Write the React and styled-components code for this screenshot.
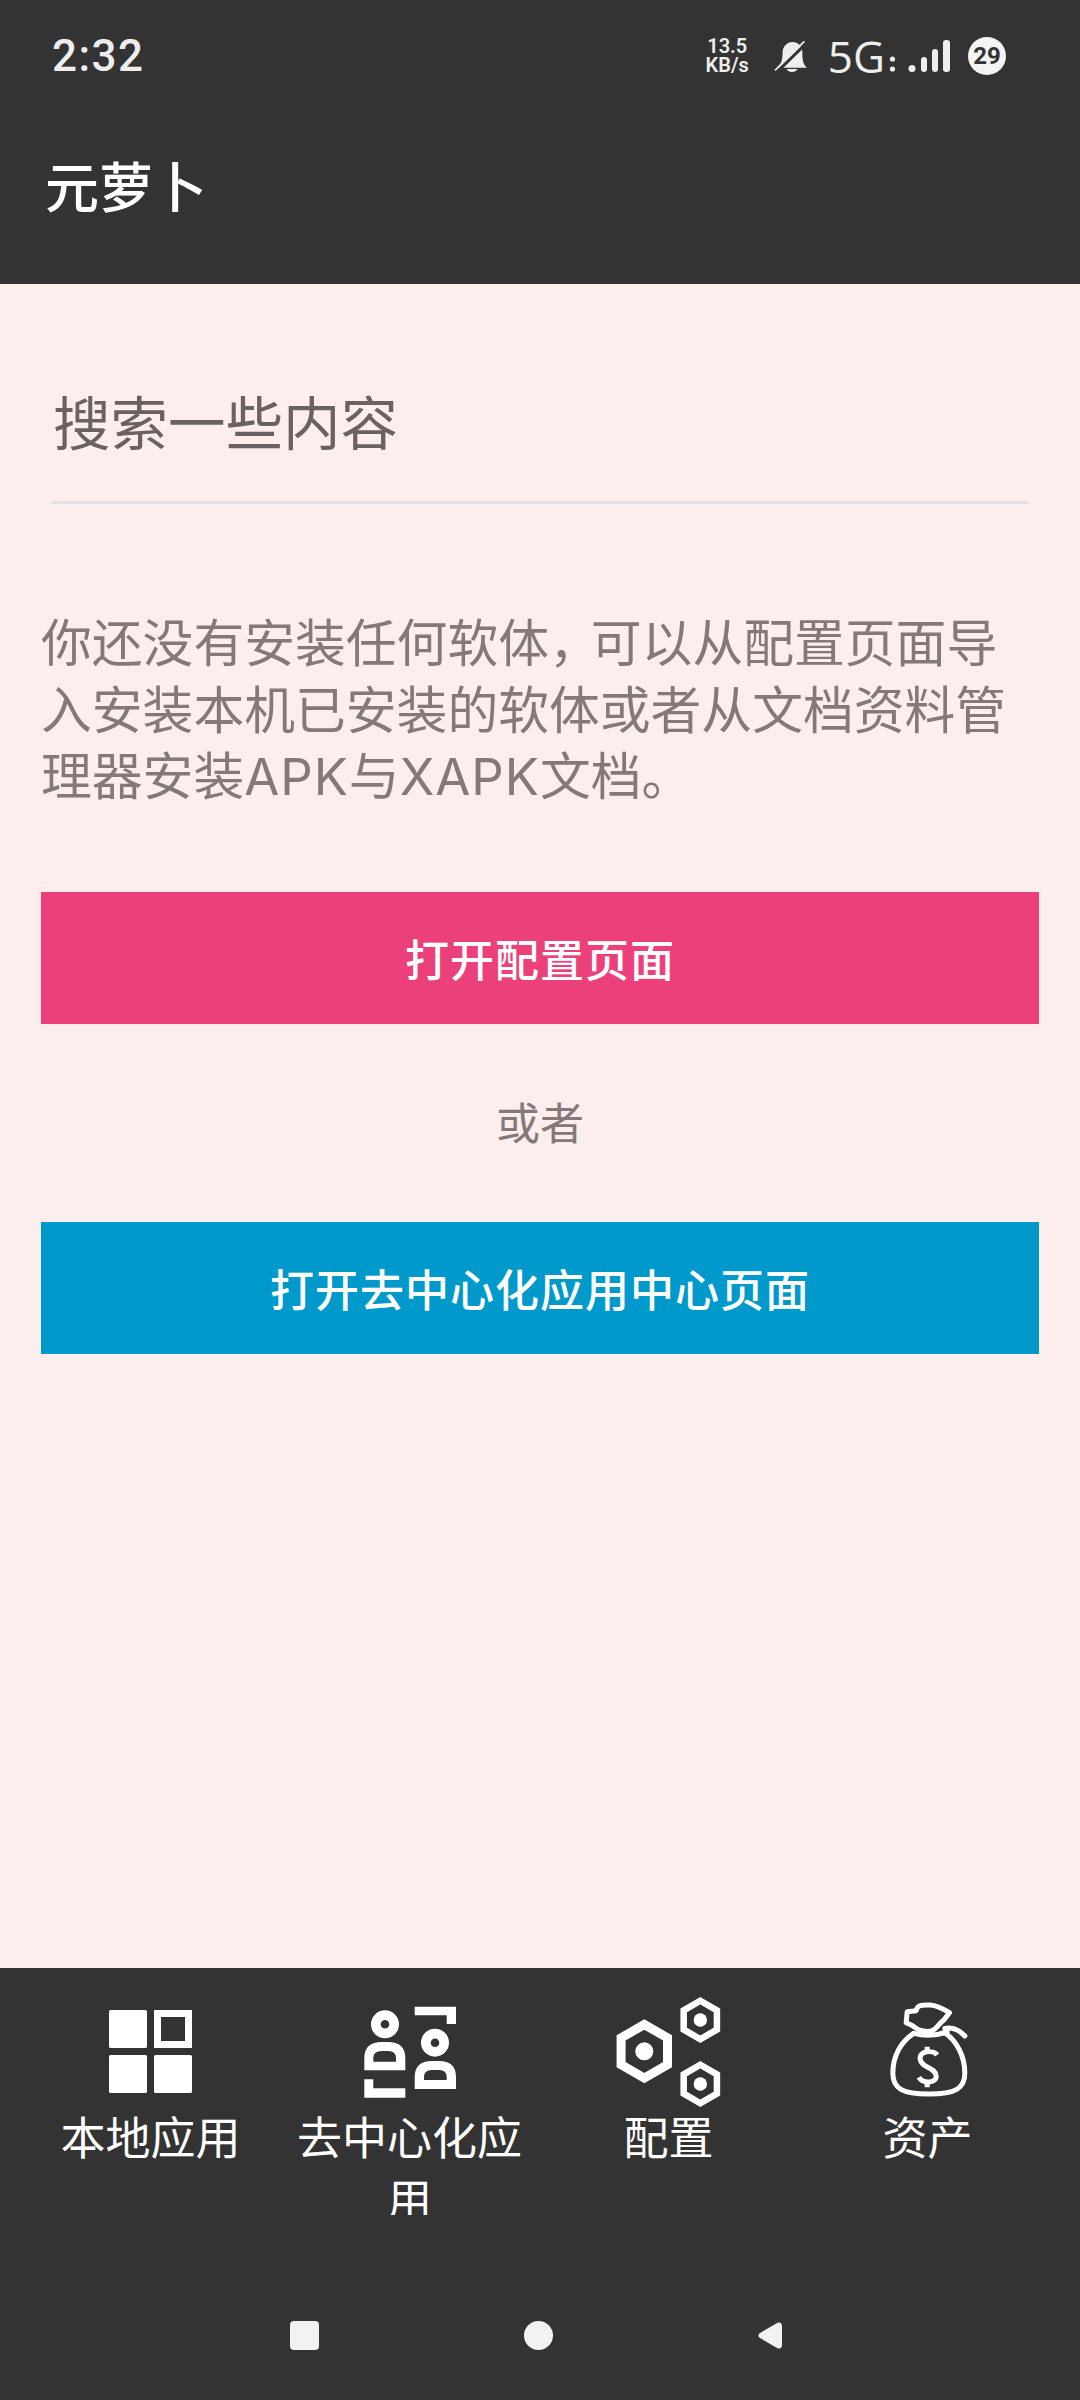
import React from 'react';
import styled, { createGlobalStyle } from 'styled-components';

const CJK = '"Noto Sans CJK SC", "Noto Sans", sans-serif';

const Global = createGlobalStyle`
  html, body { margin: 0; padding: 0; background: #fceeed; }
  #root { width: 1080px; height: 2400px; }
`;
const Page = styled.div`
  width: 1080px; height: 2400px; display: flex; flex-direction: column;
  background: #fceeed; font-family: ${CJK}; overflow: hidden;
`;
const Header = styled.header`
  height: 284px; background: #333333; display: flex; flex-direction: column; flex: none;
`;
const StatusBar = styled.div`
  height: 112px; display: flex; align-items: center; justify-content: space-between;
  padding: 0 74px 0 52px; color: #eeeeee; flex: none;
`;
const Clock = styled.span`
  font-family: Roboto, sans-serif; font-size: 44px; letter-spacing: 1.5px; font-weight: 500;
`;
const StatusIcons = styled.div`display: flex; align-items: center;`;
const Speed = styled.div`
  font-family: Roboto, sans-serif; font-size: 20px; line-height: 19px; font-weight: 600;
  text-align: center; color: #eeeeee; margin-right: 25px;
`;
const Net = styled.span`
  font-family: "Open Sans", sans-serif; font-size: 44px; font-weight: 500; line-height: 1; margin: 0 3px 0 21px;
`;
const Badge = styled.span`
  width: 38px; height: 38px; border-radius: 50%; background: #f4f4f4; color: #333;
  font-family: Roboto, sans-serif; font-weight: 700; font-size: 24px;
  display: flex; align-items: center; justify-content: center; margin-left: 16px;
`;
const Title = styled.h1`
  margin: 35px 0 0; padding: 0 0 0 45px; font-size: 54px; line-height: 76px; font-weight: 500; color: #fff;
`;
const Content = styled.main`
  flex: 1; display: flex; flex-direction: column; padding: 0 41px;
`;
const SearchField = styled.div`
  margin: 92px 11px 0; height: 128px; border-bottom: 3px solid #e5e1e2; box-sizing: border-box;
  font-size: 57.5px; line-height: 89px; color: #6a6261; padding-left: 1px;
`;
const Message = styled.p`
  margin: 107px 0 0; height: 197px; font-family: Inter, ${CJK}; font-size: 50.8px; line-height: 66.5px; color: #857878; width: 1000px;
`;
const Comma = styled.span`letter-spacing: -9px;`;
const Latin = styled.span`letter-spacing: 1px;`;
const ActionButton = styled.button`
  display: block; width: 998px; height: 132px; border: 0; padding: 0; color: #fff;
  background: ${p => p.$bg}; font-family: ${CJK}; font-size: 44px; font-weight: 500;
  letter-spacing: 1px; margin-top: ${p => p.$top}px; flex: none;
`;
const Or = styled.div`
  margin-top: 65px; text-align: center; font-size: 44px; line-height: 64px; color: #857878;
`;
const BottomNav = styled.nav`
  height: 432px; flex: none; background: #333333; display: flex; flex-direction: column;
`;
const Tabs = styled.div`display: flex; height: 310px; padding: 0 0 0 21px;`;
const Tab = styled.div`
  width: 259px; display: flex; flex-direction: column; align-items: center; padding-top: 29px; box-sizing: border-box;
`;
const IconBox = styled.div`
  height: 110px; width: 120px; display: flex; align-items: center; justify-content: center; flex: none;
`;
const TabLabel = styled.div`
  width: 240px; margin-top: -2px; font-size: 45px; line-height: 62px; color: #fff; text-align: center;
  ${p => p.$clip && 'max-height: 110px; overflow: hidden;'}
`;
const SysNav = styled.div`
  flex: 1; display: flex; align-items: center; justify-content: space-between; padding: 0 298px 7px 290px;
`;
const SysSquare = styled.span`width: 29px; height: 29px; border-radius: 4px; background: #f2f2f2;`;
const SysCircle = styled.span`width: 29px; height: 29px; border-radius: 50%; background: #f2f2f2;`;

const Bell = () => (
  <svg width="33" height="33" viewBox="212 26 100 100">
    <path fill="#eee" d="M222 110C236 98 238 80 238 62 240 42 255 32 268 32 285 32 298 45 298 62 298 80 298 98 312 110Z"/>
    <path fill="#eee" d="M250 114C255 126 278 126 283 114Z"/>
    <path d="M222 122 312 34" stroke="#333" strokeWidth="9" fill="none"/>
    <path d="M215 118 304 30" stroke="#eee" strokeWidth="5" fill="none"/>
  </svg>
);
const Signal = () => (
  <svg width="64" height="34" viewBox="0 0 64 34" fill="#eee">
    <circle cx="4.5" cy="20" r="2.6"/>
    <circle cx="4.5" cy="30" r="2.6"/>
    <circle cx="24" cy="29.500" r="3.500"/>
    <rect x="33" y="18" width="6" height="15" rx="3"/>
    <rect x="44" y="10" width="6" height="23" rx="3"/>
    <rect x="55" y="1" width="7" height="32" rx="3"/>
  </svg>
);
const GridIcon = () => (
  <svg width="84" height="84" viewBox="0 0 84 84" fill="#fff">
    <rect x="0" y="0" width="38" height="38" rx="1.5"/>
    <rect x="48.500" y="3.500" width="31" height="31" fill="none" stroke="#fff" strokeWidth="7"/>
    <rect x="0" y="45" width="38" height="38" rx="1.5"/>
    <rect x="45" y="45" width="38" height="38" rx="1.5"/>
  </svg>
);
const PeopleIcon = () => (
  <svg width="92" height="92" viewBox="0 0 92 92" fill="#fff">
    <circle cx="21" cy="18.300" r="9.150" fill="none" stroke="#fff" strokeWidth="9.700"/>
    <path fillRule="evenodd" d="M.3 64.300V52Q.3 36 18 36H24Q41.300 36 41.300 52V64.300ZM9.300 55.700H32V52Q32 45 24 45H18Q9.300 45 9.300 52Z"/>
    <path d="M.3 73.300H9.300V82.300H41.300V91.700H.3Z"/>
    <path d="M50.700.7H92V18H82.700V9.300H50.700Z"/>
    <circle cx="71" cy="36.700" r="9.150" fill="none" stroke="#fff" strokeWidth="9.700"/>
    <path fillRule="evenodd" d="M50.700 83V71Q50.700 55 68 55H75Q92 55 92 71V83ZM60 74H82.700V71Q82.700 64 75 64H68Q60 64 60 71Z"/>
  </svg>
);
const Hex = ({ cx, cy, r, sw, dot }) => {
  const pts = [0, 1, 2, 3, 4, 5].map(i => {
    const a = Math.PI / 3 * i - Math.PI / 2;
    return `${cx + r * Math.cos(a)},${cy + r * Math.sin(a)}`;
  }).join(' ');
  return <g><polygon points={pts} fill="none" stroke="#fff" strokeWidth={sw}/><circle cx={cx} cy={cy} r={dot} fill="#fff"/></g>;
};
const HexIcon = () => (
  <svg width="105" height="110" viewBox="0 0 105 110">
    <Hex cx={28.3} cy={54.3} r={26.8} sw={9} dot={9}/>
    <Hex cx={84.3} cy={23} r={19.2} sw={6.5} dot={6.7}/>
    <Hex cx={84.3} cy={87} r={19.2} sw={6.5} dot={6.7}/>
  </svg>
);
const BagIcon = () => (
  <svg width="90" height="104" viewBox="-7.5 0 270 312" fill="none" stroke="#fff" strokeWidth="15" strokeLinecap="round" strokeLinejoin="round">
    <path d="M65 35 92 32C95 18 100 14 135 15 150 16 165 22 192 38L175 60C165 65 155 85 140 92 125 98 100 92 88 82 80 75 70 72 62 68Z"/>
    <path d="M178 85C205 80 222 90 238 108"/>
    <path d="M85 100C45 125 22 170 22 220 22 265 50 282 130 282 210 282 238 265 238 220 238 170 215 125 180 100"/>
    <path d="M85 100C115 108 155 108 185 95"/>
    <path d="M155 165C145 150 100 150 104 178 108 205 150 200 152 228 154 250 112 252 100 232" strokeLinecap="butt"/>
    <path d="M125 140V158M125 245V262" strokeLinecap="butt"/>
  </svg>
);

const tabs = [
  { label: '本地应用', icon: <GridIcon/> },
  { label: '去中心化应用', icon: <PeopleIcon/>, clip: true },
  { label: '配置', icon: <HexIcon/> },
  { label: '资产', icon: <BagIcon/> },
];

export default function App() {
  return (
    <Page>
      <Global/>
      <Header>
        <StatusBar>
          <Clock>2:32</Clock>
          <StatusIcons>
            <Speed>13.5<br/>KB/s</Speed>
            <Bell/>
            <Net>5G</Net>
            <Signal/>
            <Badge>29</Badge>
          </StatusIcons>
        </StatusBar>
        <Title>元萝卜</Title>
      </Header>
      <Content>
        <SearchField>搜索一些内容</SearchField>
        <Message>你还没有安装任何软体<Comma>，</Comma>可以从配置页面导入安装本机已安装的软体或者从文档资料管理器安装<Latin>APK</Latin>与<Latin>XAPK</Latin>文档。</Message>
        <ActionButton $bg="#ec407a" $top={84}>打开配置页面</ActionButton>
        <Or>或者</Or>
        <ActionButton $bg="#0099cc" $top={69}>打开去中心化应用中心页面</ActionButton>
      </Content>
      <BottomNav>
        <Tabs>
          {tabs.map(t => (
            <Tab key={t.label}>
              <IconBox>{t.icon}</IconBox>
              <TabLabel $clip={t.clip}>{t.label}</TabLabel>
            </Tab>
          ))}
        </Tabs>
        <SysNav>
          <SysSquare/>
          <SysCircle/>
          <svg width="24" height="27" viewBox="0 0 24 27" fill="#f2f2f2"><path d="M20 .5C22 0 24 1 24 4V23C24 26 22 27.500 19 26L2 16C0 15 0 12 2 11Z"/></svg>
        </SysNav>
      </BottomNav>
    </Page>
  );
}
